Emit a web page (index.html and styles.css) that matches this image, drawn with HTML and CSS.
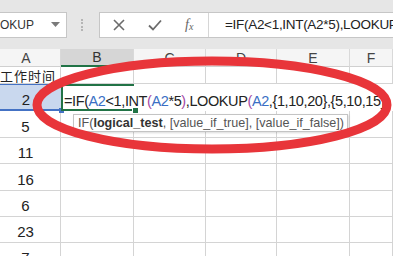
FILE: index.html
```html
<!DOCTYPE html>
<html lang="zh-CN">
<head>
    <meta charset="UTF-8">
    <title>IF + LOOKUP</title>
    <link rel="stylesheet" href="styles.css">
</head>
<body>
    <div class="toolbar">
        <div class="namebox">
            <span>OKUP</span>
            <svg class="caret" width="9" height="6" viewBox="0 0 9 6"><path d="M0 0h9L4.5 5z" fill="#7a7a7a"/></svg>
        </div>
        <div class="grip"></div>
        <div class="bar">
            <div class="buttons">
                <svg width="12" height="12" viewBox="0 0 12 12"><path d="M1 1l10 10M11 1L1 11" stroke="#6b6b6b" stroke-width="1.6" fill="none"/></svg>
                <svg width="14" height="12" viewBox="0 0 14 12"><path d="M1 6.5l4 4L13 1.5" stroke="#6b6b6b" stroke-width="1.8" fill="none"/></svg>
                <span class="fx">f<sub>x</sub></span>
            </div>
            <div class="formula">=IF(A2&lt;1,INT(A2*5),LOOKUP(A2,{1,10,20},{5,10,15},</div>
        </div>
    </div>

    <div class="sheet">
        <div class="head">A</div>
        <div class="head active">B</div>
        <div class="head">C</div>
        <div class="head">D</div>
        <div class="head">E</div>
        <div class="head">F</div>

        <div class="cell title">工作时间</div>
        <div class="cell"></div>
        <div class="cell"></div>
        <div class="cell"></div>
        <div class="cell"></div>
        <div class="cell"></div>

        <div class="cell num ref">2</div>
        <div class="cell editing">=IF(<span class="a2">A2</span>&lt;1,INT<span class="p2">(</span><span class="a2">A2</span>*5<span class="p2">)</span>,LOOKUP<span class="p2">(</span><span class="a2">A2</span>,{1,10,20},{5,10,15},</div>

        <div class="cell num">5</div>
        <div class="cell"></div><div class="cell"></div><div class="cell"></div><div class="cell"></div><div class="cell"></div>
        <div class="cell num">11</div>
        <div class="cell"></div><div class="cell"></div><div class="cell"></div><div class="cell"></div><div class="cell"></div>
        <div class="cell num">16</div>
        <div class="cell"></div><div class="cell"></div><div class="cell"></div><div class="cell"></div><div class="cell"></div>
        <div class="cell num">6</div>
        <div class="cell"></div><div class="cell"></div><div class="cell"></div><div class="cell"></div><div class="cell"></div>
        <div class="cell num">23</div>
        <div class="cell"></div><div class="cell"></div><div class="cell"></div><div class="cell"></div><div class="cell"></div>
        <div class="cell num">7</div>
        <div class="cell"></div><div class="cell"></div><div class="cell"></div><div class="cell"></div><div class="cell"></div>
    </div>

    <div class="tip">IF(<b>logical_test</b>, [value_if_true], [value_if_false])</div>

    <svg class="mark" width="393" height="260" viewBox="0 0 393 260">
        <ellipse cx="212" cy="105" rx="175" ry="44" fill="none" stroke="#e8353a" stroke-width="9"/>
    </svg>
</body>
</html>
```

FILE: styles.css
```css
body {
    margin: 0;
    width: 393px;
    height: 260px;
    overflow: hidden;
    position: relative;
    background: #fff;
    font-family: "Liberation Sans", Arial, "Noto Sans CJK SC", sans-serif;
    color: #222;
}
.toolbar {
    height: 49px;
    background: #e6e6e6;
    display: flex;
    align-items: flex-start;
    padding-top: 12px;
    box-sizing: border-box;
}
.namebox {
    flex: 0 0 67px;
    height: 26px;
    background: #fff;
    border: 1px solid #c6c6c6;
    border-left: none;
    box-sizing: border-box;
    display: flex;
    align-items: center;
    justify-content: space-between;
    padding-right: 6px;
    font-size: 12px;
    color: #333;
}
.grip {
    flex: 0 0 2px;
    height: 12px;
    margin: 7px 14px 0 14px;
    border-left: 2px dotted #b5b5b5;
}
.bar {
    flex: 1;
    min-width: 0;
    height: 26px;
    display: flex;
    background: #fff;
    border: 1px solid #c6c6c6;
    border-right: none;
    box-sizing: border-box;
}
.buttons {
    flex: 0 0 109px;
    display: flex;
    align-items: center;
    gap: 23px;
    padding-left: 13px;
    border-right: 1px solid #d6d6d6;
    box-sizing: border-box;
}
.fx {
    font-family: "Liberation Serif", serif;
    font-style: italic;
    font-size: 14px;
    color: #666;
}
.fx sub {
    font-size: 10px;
    vertical-align: -1px;
}
.formula {
    min-width: 0;
    padding-left: 16px;
    line-height: 24px;
    font-size: 13.5px;
    letter-spacing: -0.3px;
    white-space: nowrap;
    overflow: hidden;
}
.sheet {
    display: grid;
    grid-template-columns: 61px 73px 72px 71px 73px 1fr;
    grid-template-rows: 18px 17px 27px 27px 26px 27px 26px 26px 26px;
    height: 207px;
    overflow: hidden;
}
.head {
    background: #f5f5f5;
    border-right: 1px solid #d9d9d9;
    border-bottom: 1px solid #d0d0d0;
    font-size: 14px;
    color: #444;
    display: flex;
    align-items: center;
    justify-content: center;
    box-sizing: border-box;
}
.head:first-child {
    padding-right: 8px;
}
.head.active {
    background: #d6d6d6;
    border-bottom: 2px solid #217346;
    color: #333;
}
.cell {
    border-right: 1px solid #d4d4d4;
    border-bottom: 1px solid #d4d4d4;
    box-sizing: border-box;
    display: flex;
    align-items: flex-end;
    padding-bottom: 2px;
    font-size: 15px;
    min-width: 0;
}
.title {
    font-size: 13px;
    align-items: center;
    padding: 0;
    letter-spacing: 1px;
    font-family: "Noto Sans CJK SC", sans-serif;
    line-height: 1;
    white-space: nowrap;
    overflow: hidden;
}
.num {
    justify-content: center;
    padding-right: 9px;
}
.ref {
    background: #c9d8ee;
    border-top: 1px solid #4472c4;
    border-bottom: 2px solid #4472c4;
    border-right: none;
    position: relative;
    padding-bottom: 1px;
}
.ref::after {
    content: "";
    position: absolute;
    right: -3px;
    bottom: -4px;
    width: 5px;
    height: 5px;
    background: #4472c4;
}
.editing {
    grid-column: 2 / -1;
    background: #fff;
    border: none;
    white-space: nowrap;
    position: relative;
    padding-left: 3px;
    letter-spacing: -0.4px;
    font-size: 14.5px;
}
.editing::before {
    content: "";
    position: absolute;
    left: 0;
    top: 0;
    width: 73px;
    height: 100%;
    border: 2px solid #217346;
    border-right: none;
    box-sizing: border-box;
}
.editing::after {
    content: "";
    position: absolute;
    left: 71px;
    bottom: -3px;
    width: 5px;
    height: 5px;
    background: #217346;
    border: 1px solid #fff;
}
.a2 {
    color: #3a6fc4;
}
.p2 {
    color: #a54ba5;
}
.tip {
    position: absolute;
    left: 73px;
    top: 114px;
    width: 275px;
    height: 18px;
    box-sizing: border-box;
    background: #fff;
    border: 1px solid #c4c4c4;
    box-shadow: 1px 1px 2px rgba(0, 0, 0, 0.15);
    font-size: 12.6px;
    line-height: 16px;
    padding-left: 4px;
    color: #555;
    white-space: nowrap;
}
.tip b {
    color: #333;
}
.mark {
    position: absolute;
    left: 0;
    top: 0;
}
```
